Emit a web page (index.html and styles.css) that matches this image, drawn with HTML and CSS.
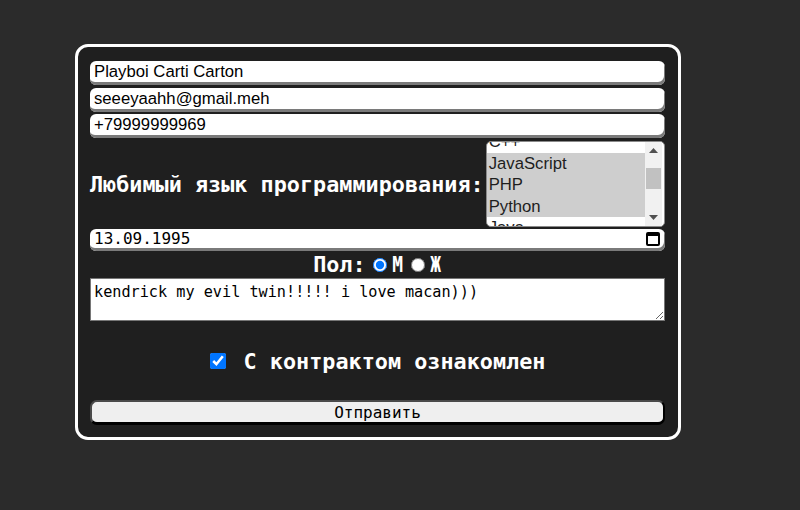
FILE: index.html
```html
<!DOCTYPE html>
<html lang="ru">
<head>
<meta charset="utf-8">
<title>Форма</title>
<link rel="stylesheet" href="styles.css">
</head>
<body>
<div class="page">
  <form class="card">
    <input class="field" type="text" value="Playboi Carti Carton">
    <input class="field" type="text" value="seeeyaahh@gmail.meh">
    <input class="field" type="text" value="+79999999969">
    <div class="lang-row">
      <label class="big-label">Любимый язык программирования:</label>
      <div class="langs">
        <div class="list">
          <div class="opt">C++</div>
          <div class="opt sel">JavaScript</div>
          <div class="opt sel">PHP</div>
          <div class="opt sel">Python</div>
          <div class="opt">Java</div>
        </div>
        <div class="sbar">
          <div class="sbtn"><svg width="9" height="5" viewBox="0 0 9 5"><path d="M0 5 L4.5 0 L9 5 Z" fill="#505050"/></svg></div>
          <div class="track"><div class="thumb"></div></div>
          <div class="sbtn"><svg width="9" height="5" viewBox="0 0 9 5"><path d="M0 0 L9 0 L4.5 5 Z" fill="#505050"/></svg></div>
        </div>
      </div>
    </div>
    <div class="date">
      <span class="date-text">13.09.1995</span>
      <svg class="cal" width="14" height="15" viewBox="0 0 14 15"><rect x="1" y="2" width="12" height="12" rx="1" fill="none" stroke="#000" stroke-width="2"/><rect x="1" y="2" width="12" height="3" fill="#000"/></svg>
    </div>
    <div class="sex-row">
      <span class="big-label">Пол:</span>
      <input class="radio" type="radio" name="sex" checked>
      <span class="big-label cond">М</span>
      <input class="radio" type="radio" name="sex">
      <span class="big-label cond">Ж</span>
    </div>
    <textarea class="bio">kendrick my evil twin!!!!! i love macan)))</textarea>
    <div class="check-row">
      <input class="check" type="checkbox" checked>
      <span class="big-label">С контрактом ознакомлен</span>
    </div>
    <button class="submit" type="button">Отправить</button>
  </form>
</div>
<script src="script.js"></script>
</body>
</html>
```
FILE: styles.css
```css
html, body {
  margin: 0;
  background: #2b2b2b;
}
.page {
  padding: 44px 0 0 75px;
}
.card {
  box-sizing: border-box;
  width: 606px;
  height: 396px;
  border: 3px solid #ffffff;
  border-radius: 13px;
  background: #1f1f1f;
  padding: 14px 13px 12px 12px;
  display: flex;
  flex-direction: column;
}
.field {
  box-sizing: border-box;
  height: 24px;
  margin: 0 0 2.5px 0;
  border: 0;
  border-radius: 6px;
  background: #fff;
  box-shadow: inset -1px -3px 0 #7a7a7a;
  padding: 1px 4px 3px 4px;
  font-family: "Liberation Sans", Arial, sans-serif;
  font-size: 16.7px;
  color: #000;
  outline: none;
}
.big-label {
  font-family: "DejaVu Sans Mono", monospace;
  font-size: 21.8px;
  font-weight: bold;
  color: #fff;
}
.cond {
  display: inline-block;
  transform: scaleX(0.82);
}
.lang-row {
  display: flex;
  align-items: center;
  height: 86px;
  margin-top: 0.5px;
  gap: 2px;
}
.lang-row .big-label {
  flex: none;
}
.langs {
  flex: 1;
  height: 86px;
  box-sizing: border-box;
  border: 1px solid #8a8a8a;
  border-radius: 5px;
  background: #fff;
  display: flex;
  overflow: hidden;
}
.list {
  flex: 1;
  overflow: hidden;
  font-family: "Liberation Sans", Arial, sans-serif;
  font-size: 16.7px;
  color: #1e1e1e;
}
.opt {
  height: 21.5px;
  line-height: 21.5px;
  padding-left: 2px;
  white-space: nowrap;
}
.opt.sel {
  background: #cecece;
}
.sbar {
  width: 17px;
  flex: none;
  background: #f1f1f1;
  display: flex;
  flex-direction: column;
  margin-right: 2px;
}
.sbtn {
  height: 17px;
  flex: none;
  display: flex;
  align-items: center;
  justify-content: center;
}
.track {
  flex: 1;
  padding-top: 9px;
}
.thumb {
  height: 21px;
  margin: 0 1px;
  background: #c1c1c1;
}
.date {
  box-sizing: border-box;
  height: 22px;
  margin-top: 2px;
  border-radius: 6px;
  background: #fff;
  box-shadow: inset -1px -3px 0 #7a7a7a;
  display: flex;
  align-items: center;
  justify-content: space-between;
  padding: 0 5px 2px 4px;
}
.date-text {
  font-family: "DejaVu Sans Mono", monospace;
  font-size: 16px;
  color: #000;
}
.cal {
  display: block;
}
.sex-row {
  height: 26px;
  margin-top: 1px;
  display: flex;
  align-items: center;
  justify-content: center;
  gap: 3px;
}
.radio {
  width: 14px;
  height: 14px;
  margin: 0 1px 0 4px;
  accent-color: #0075ff;
}
.bio {
  box-sizing: border-box;
  height: 44px;
  margin: 0;
  border: 1px solid #767676;
  background: #fff;
  font-family: "DejaVu Sans Mono", monospace;
  font-size: 15.2px;
  padding: 4px 3px;
  color: #000;
  resize: vertical;
  outline: none;
}
.check-row {
  height: 26px;
  margin-top: 27px;
  display: flex;
  align-items: center;
  justify-content: center;
  gap: 18px;
}
.check {
  width: 16px;
  height: 16px;
  margin: 0;
  accent-color: #0075ff;
}
.submit {
  box-sizing: border-box;
  height: 25px;
  margin-top: 26px;
  border: 2px solid #4a4a4a;
  border-right-color: #000;
  border-bottom: 3px solid #000;
  border-radius: 7px;
  background: #efefef;
  font-family: "DejaVu Sans Mono", monospace;
  font-size: 16px;
  color: #000;
  padding: 0;
}
```
FILE: script.js
```js
document.querySelector('.list').scrollTop = 11;
```
